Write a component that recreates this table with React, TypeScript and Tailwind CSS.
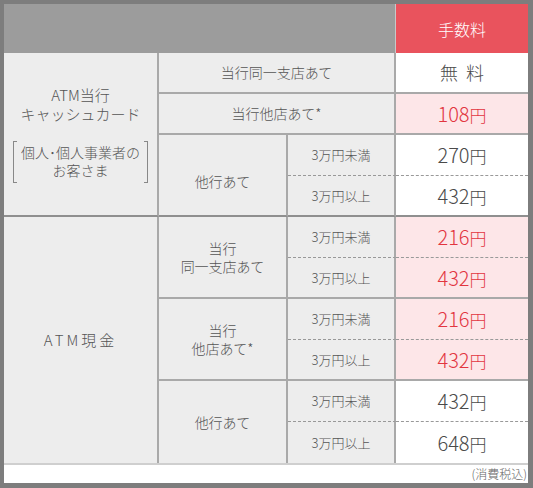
const LINE = "border-[#a9a9a9]";
const DASH = "border-b [border-bottom-style:dashed] border-b-[#999]";

type Fee = { v: string; pink?: boolean };

function Yen({ fee }: { fee: Fee }) {
  return (
    <span className={fee.pink ? "text-[#e2353f]" : "text-[#4a4a4a]"}>
      <span className="text-[20px]">{fee.v}</span>
      <span className="text-[17px]">円</span>
    </span>
  );
}

function Bracket({ side }: { side: "l" | "r" }) {
  return (
    <div
      className={`w-[4px] self-stretch border-y border-[#888] ${
        side === "l" ? "border-l" : "border-r"
      }`}
    />
  );
}

// 2段になっている行 (3万円未満 / 3万円以上)
function SplitRows({
  label,
  under,
  over,
  bottom,
}: {
  label: React.ReactNode;
  under: Fee;
  over: Fee;
  bottom: string;
}) {
  return (
    <>
      <tr className="h-[41px]">
        <td rowSpan={2} className={`border-r-2 ${bottom} ${LINE} bg-[#ededed] text-center text-[14px] leading-[18px] text-[#555]`}>
          {label}
        </td>
        <td className={`border-r-2 ${LINE} ${DASH} bg-[#ededed] text-center text-[13px] text-[#555]`}>
          3万円未満
        </td>
        <td className={`${DASH} ${under.pink ? "bg-[#fde6e8]" : "bg-white"} text-center`}>
          <Yen fee={under} />
        </td>
      </tr>
      <tr className="h-[41px]">
        <td className={`border-r-2 ${LINE} ${bottom} bg-[#ededed] text-center text-[13px] text-[#555]`}>3万円以上</td>
        <td className={`${LINE} ${bottom} ${over.pink ? "bg-[#fde6e8]" : "bg-white"} text-center`}>
          <Yen fee={over} />
        </td>
      </tr>
    </>
  );
}

export default function App() {
  const rowLine = "border-b-2 border-b-[#a9a9a9]";
  const groupLine = "border-b-2 border-b-[#8f8f8f]";
  return (
    <div
      className="w-[533px] h-[488px] bg-white border-t-4 border-l-4 border-r-[5px] border-b-[5px] border-[#7d7d7d] flex flex-col font-light"
      style={{ fontFamily: '"Noto Sans CJK JP", "Noto Sans", sans-serif' }}
    >
      <table className="w-[524px] table-fixed border-separate border-spacing-0">
        <colgroup>
          <col className="w-[155px]" />
          <col className="w-[129px]" />
          <col className="w-[108px]" />
          <col className="w-[132px]" />
        </colgroup>
        <tbody>
          <tr className="h-[49px]">
            <td colSpan={3} className="bg-[#9c9c9c] border-r border-[#c8c8c8]" />
            <td className="bg-[#e9535d] text-white text-center text-[16px]">手数料</td>
          </tr>

          {/* ATM当行キャッシュカード */}
          <tr className="h-[41px]">
            <td rowSpan={4} className={`border-r-2 ${LINE} ${groupLine} bg-[#ededed] text-center text-[#555]`}>
              <div className="flex flex-col items-center">
                <div className="text-[15px] leading-[19px]">ATM当行</div>
                <div className="text-[15px] leading-[19px]">キャッシュカード</div>
                <div className="flex items-stretch gap-[4px] mt-[18px] h-[42px]">
                  <Bracket side="l" />
                  <div className="text-[14px] leading-[18px] pt-[2px]">
                    個人･個人事業者の
                    <br />
                    お客さま
                  </div>
                  <Bracket side="r" />
                </div>
              </div>
            </td>
            <td colSpan={2} className={`border-r-2 ${LINE} ${rowLine} bg-[#ededed] text-center text-[14px] text-[#555]`}>
              当行同一支店あて
            </td>
            <td className={`${rowLine} bg-white text-center text-[18px] text-[#4a4a4a]`}>無&nbsp;&nbsp;料</td>
          </tr>
          <tr className="h-[41px]">
            <td colSpan={2} className={`border-r-2 ${LINE} ${rowLine} bg-[#ededed] text-center text-[14px] text-[#555]`}>
              当行他店あて*
            </td>
            <td className={`${rowLine} bg-[#fde6e8] text-center`}>
              <Yen fee={{ v: "108", pink: true }} />
            </td>
          </tr>
          <SplitRows
            label={<div className="mt-[12px]">他行あて</div>}
            under={{ v: "270" }}
            over={{ v: "432" }}
            bottom={groupLine}
          />

          {/* ATM現金 */}
          <tr className="h-[41px]">
            <td rowSpan={6} className={`border-r-2 ${LINE} bg-[#ededed] text-center text-[15px] tracking-[3px] text-[#555]`}>
              ATM現金
            </td>
            <td rowSpan={2} className={`border-r-2 ${LINE} ${rowLine} bg-[#ededed] text-center text-[14px] leading-[18px] text-[#555]`}>
              当行
              <br />
              同一支店あて
            </td>
            <td className={`border-r-2 ${LINE} ${DASH} bg-[#ededed] text-center text-[13px] text-[#555]`}>
              3万円未満
            </td>
            <td className={`${DASH} bg-[#fde6e8] text-center`}>
              <Yen fee={{ v: "216", pink: true }} />
            </td>
          </tr>
          <tr className="h-[41px]">
            <td className={`border-r-2 ${LINE} ${rowLine} bg-[#ededed] text-center text-[13px] text-[#555]`}>3万円以上</td>
            <td className={`${rowLine} bg-[#fde6e8] text-center`}>
              <Yen fee={{ v: "432", pink: true }} />
            </td>
          </tr>
          <SplitRows
            label={
              <>
                当行
                <br />
                他店あて*
              </>
            }
            under={{ v: "216", pink: true }}
            over={{ v: "432", pink: true }}
            bottom={rowLine}
          />
          <SplitRows label="他行あて" under={{ v: "432" }} over={{ v: "648" }} bottom="border-b-0" />
        </tbody>
      </table>
      <div className="border-t-2 border-[#cfcfcf] flex-1 flex items-end justify-end pr-[1px] text-[12px] text-[#666]">
        (消費税込)
      </div>
    </div>
  );
}
